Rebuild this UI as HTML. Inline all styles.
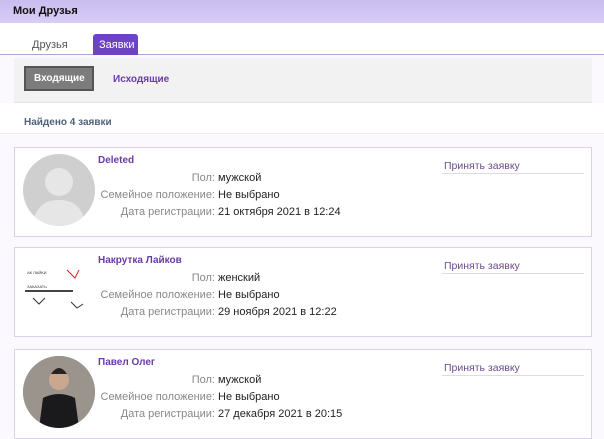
<!DOCTYPE html>
<html><head><meta charset="utf-8"><style>
*{margin:0;padding:0;box-sizing:border-box}
body{width:604px;height:439px;overflow:hidden;background:#fbf9fd;font-family:"Liberation Sans",sans-serif;font-size:11px;color:#222;position:relative}
.hdr{position:absolute;left:0;top:0;width:604px;height:23px;background:linear-gradient(#c9bdf0,#d9cdf6);font-weight:bold;font-size:11px;padding:5px 0 0 13px;color:#111}
.tabs{position:absolute;left:0;top:23px;width:604px;height:32px;background:#fff;border-bottom:1px solid #b79fd6}
.t1{position:absolute;left:32px;top:16px;color:#555}
.t2{position:absolute;left:93px;top:11px;width:45px;height:21px;background:#6b43c4;color:#fff;border-radius:3px 3px 0 0;padding:5px 0 0 6px}
.sub{position:absolute;left:14px;top:58px;width:578px;height:45px;background:#f2f2f2;border-bottom:1px solid #e4e4e4}
.b1{position:absolute;left:10px;top:8px;width:70px;height:25px;background:#7c7c7c;border:2px solid #555;color:#fff;font-weight:bold;font-size:10px;padding:5px 0 0 8px}
.b2{position:absolute;left:99px;top:16px;color:#6a3aa8;font-weight:bold;font-size:10px}
.found{position:absolute;left:0;top:103px;width:604px;height:31px;background:#fff;border-bottom:1px solid #eee;color:#50607a;font-weight:bold;font-size:10px;padding:14px 0 0 24px}
.card{position:absolute;left:14px;width:578px;height:90px;background:#fff;border:1px solid #ddd0ea}
.av{position:absolute;left:8px;top:6px;width:72px;height:72px;border-radius:50%;background:#cfcfcf;overflow:hidden}
.name{position:absolute;left:83px;top:7px;color:#6a3aa8;font-weight:bold;font-size:10px}
.rows{position:absolute;left:0;top:22px;width:420px;font-size:11px;line-height:17px}
.r{display:flex}.r .l{width:203px;text-align:right;color:#888;padding-right:3px}
.acc{position:absolute;left:427px;top:12px;width:142px;height:14px;border-bottom:1px solid #ddd;color:#6b4c8c;font-size:10.5px;padding-left:2px}
</style></head><body>
<div class="hdr">Мои Друзья</div>
<div class="tabs"><span class="t1">Друзья</span><span class="t2">Заявки</span></div>
<div class="sub"><div class="b1">Входящие</div><div class="b2">Исходящие</div></div>
<div class="found">Найдено 4 заявки</div>

<div class="card" style="top:147px"><div class="av"><svg width="72" height="72"><circle cx="36" cy="28" r="14" fill="#e6e6e6"/><path d="M10 72 Q12 46 36 46 Q60 46 62 72Z" fill="#e6e6e6"/></svg></div>
<div class="name">Deleted</div>
<div class="rows"><div class="r"><span class="l">Пол:</span>мужской</div><div class="r"><span class="l">Семейное положение:</span>Не выбрано</div><div class="r"><span class="l">Дата регистрации:</span>21 октября 2021 в 12:24</div></div>
<div class="acc">Принять заявку</div></div>

<div class="card" style="top:247px"><div class="av" style="background:#fff"><svg width="72" height="72"><text x="4" y="20" font-size="4" fill="#333">ВК ЛАЙКИ</text><text x="4" y="34" font-size="4" fill="#333">ЗАКАЗАТЬ</text><path d="M44 16l8 8 4-8" stroke="#d22" fill="none"/><path d="M10 44l6 6 6-6M48 48l6 6 6-4" stroke="#333" fill="none"/><rect x="2" y="36" width="48" height="2" fill="#444"/></svg></div>
<div class="name">Накрутка Лайков</div>
<div class="rows"><div class="r"><span class="l">Пол:</span>женский</div><div class="r"><span class="l">Семейное положение:</span>Не выбрано</div><div class="r"><span class="l">Дата регистрации:</span>29 ноября 2021 в 12:22</div></div>
<div class="acc">Принять заявку</div></div>

<div class="card" style="top:349px"><div class="av" style="background:#8a8580"><svg width="72" height="72"><rect width="72" height="72" fill="#9a948c"/><circle cx="36" cy="24" r="10" fill="#caa890"/><path d="M28 18q8-12 16 0" fill="#2a2220"/><path d="M16 72l4-30q16-8 32 0l4 30z" fill="#1a1a1c"/></svg></div>
<div class="name">Павел Олег</div>
<div class="rows"><div class="r"><span class="l">Пол:</span>мужской</div><div class="r"><span class="l">Семейное положение:</span>Не выбрано</div><div class="r"><span class="l">Дата регистрации:</span>27 декабря 2021 в 20:15</div></div>
<div class="acc">Принять заявку</div></div>
</body></html>
